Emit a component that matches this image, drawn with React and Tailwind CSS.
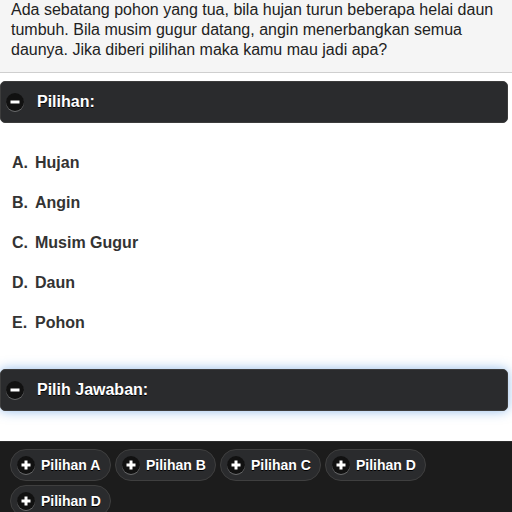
const options = [
  { key: 'A.', label: 'Hujan' },
  { key: 'B.', label: 'Angin' },
  { key: 'C.', label: 'Musim Gugur' },
  { key: 'D.', label: 'Daun' },
  { key: 'E.', label: 'Pohon' },
];

const answers = ['Pilihan A', 'Pilihan B', 'Pilihan C', 'Pilihan D', 'Pilihan D'];

// Round icon used in headers and buttons
function RoundIcon({ plus = false }) {
  return (
    <span className="w-[18px] h-[18px] rounded-full bg-[#111] shadow-[0_1px_0_rgba(255,255,255,0.3)] flex items-center justify-center shrink-0">
      <svg width="12" height="12" viewBox="0 0 12 12">
        <rect x="1.5" y="4.5" width="9" height="3" fill="#fff" />
        {plus && <rect x="4.5" y="1.5" width="3" height="9" fill="#fff" />}
      </svg>
    </span>
  );
}

function Header({ title, glow = false }) {
  return (
    <div
      className={`h-[42px] mr-[4px] rounded-[5px] bg-[#2a2b2d] border border-[#3c3c3c] flex items-center pl-[5px] gap-[13px] ${
        glow ? 'shadow-[0_0_12px_rgba(56,132,216,0.55)]' : ''
      }`}
    >
      <RoundIcon />
      <span className="text-white font-bold text-[16px] [text-shadow:0_1px_0_#000]">{title}</span>
    </div>
  );
}

export default function App() {
  return (
    <div className="w-[512px] h-[512px] overflow-hidden bg-white font-['Liberation_Sans',Arial,sans-serif] text-[#333]">
      <div className="bg-[#f5f5f5] border-b border-[#cfcfcf] h-[73px] pl-[11px] pr-3 text-[16px] leading-[20px] text-[#222]">
        Ada sebatang pohon yang tua, bila hujan turun beberapa helai daun tumbuh. Bila musim gugur datang, angin menerbangkan semua daunya. Jika diberi pilihan maka kamu mau jadi apa?
      </div>

      <div className="mt-[8px]">
        <Header title="Pilihan:" />
      </div>

      <div className="pt-[20px] pb-[26px] flex flex-col">
        {options.map((o) => (
          <div key={o.key} className="h-[40px] flex items-center pl-[12px] font-bold text-[16px] text-[#333]">
            <span className="w-[23px]">{o.key}</span>
            <span>{o.label}</span>
          </div>
        ))}
      </div>

      <Header title="Pilih Jawaban:" glow />

      <div className="mt-[30px] bg-[#1c1c1c] border-t border-[#2c2c2c] pt-[7px] pl-[10px] flex flex-wrap gap-x-[4px] gap-y-[4px]">
        {answers.map((a, i) => (
          <button
            key={i}
            className="w-[101px] h-[32px] rounded-full bg-[#2a2b2d] border border-[#3f3f3f] flex items-center pl-[6px] gap-[6px] text-white font-bold text-[14px] [text-shadow:0_1px_0_#000]"
          >
            <RoundIcon plus />
            <span>{a}</span>
          </button>
        ))}
      </div>
    </div>
  );
}
